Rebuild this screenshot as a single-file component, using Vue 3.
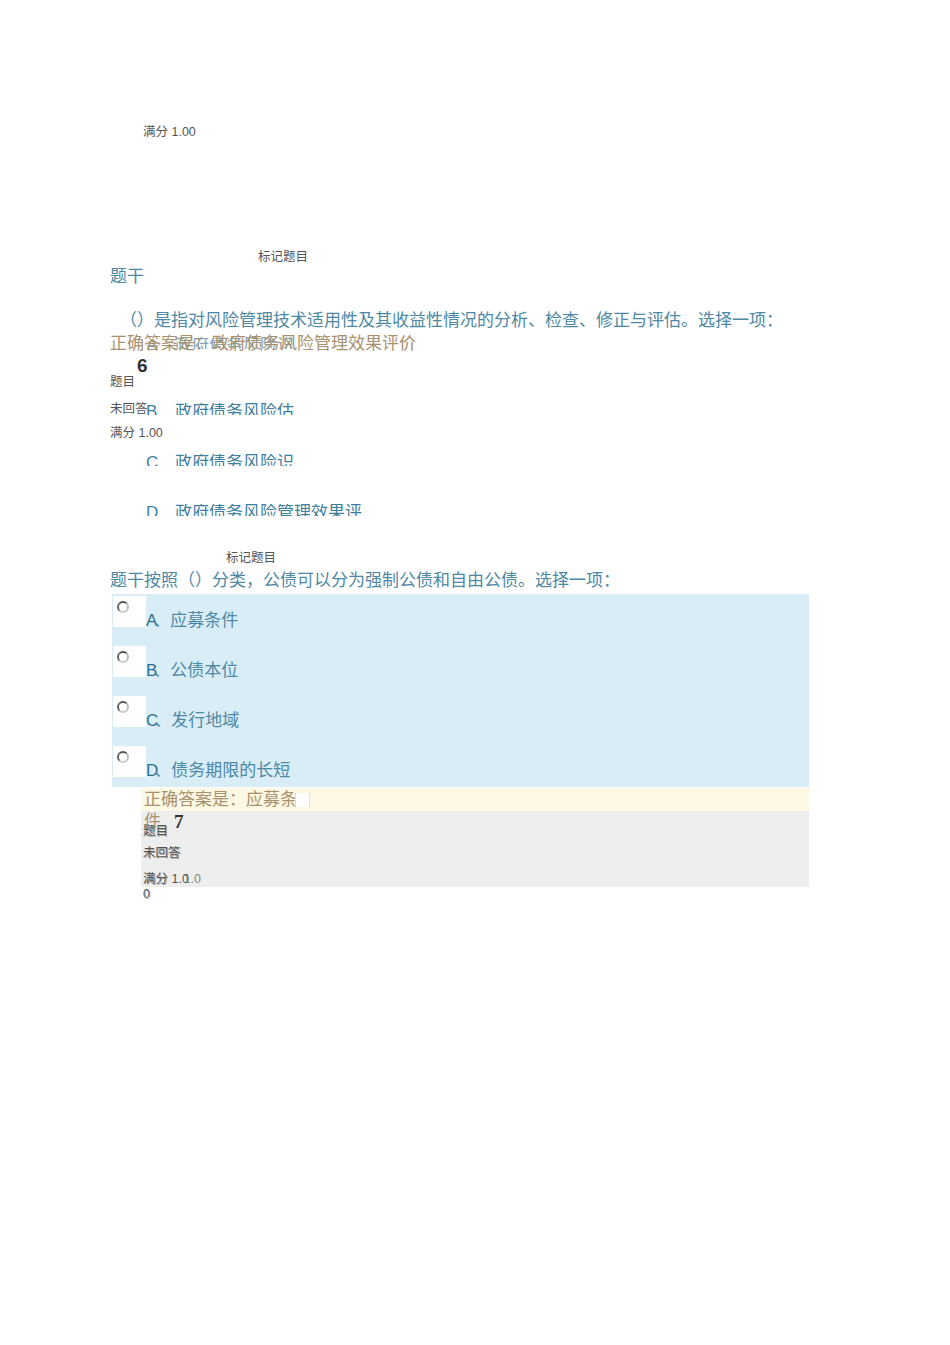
<template>
  <div class="page">
    <p class="meta score-top">满分 1.00</p>

    <section class="question">
      <p class="meta flag flag-five">标记题目</p>
      <p class="body-text stem-label">题干</p>
      <p class="body-text stem">（）是指对风险管理技术适用性及其收益性情况的分析、检查、修正与评估。选择一项：</p>

      <div class="stack">
        <div class="clipped-options">
          <div v-for="opt in clippedOptions" :key="opt.letter" class="clipped-row" :class="opt.cls">
            <span class="clipped-letter">{{ opt.letter }}</span>
            <span>{{ opt.text }}</span>
          </div>
        </div>
        <div class="info-left">
          <p class="body-text answer-text">正确答案是：政府债务风险管理效果评价</p>
          <p class="qno">6</p>
          <p class="meta info-title">题目</p>
          <p class="meta info-state">未回答</p>
          <p class="meta info-score">满分 1.00</p>
        </div>
      </div>
    </section>

    <section class="question">
      <p class="meta flag flag-six">标记题目</p>
      <p class="body-text stem-six">题干按照（）分类，公债可以分为强制公债和自由公债。选择一项：</p>

      <div class="options-panel">
        <div v-for="opt in options" :key="opt" class="option-row">
          <div class="radio-box"><span class="radio"></span></div>
          <span class="option-label"><b>{{ opt.slice(0, 1) }}</b>{{ opt.slice(1) }}</span>
        </div>
      </div>

      <div class="feedback">
        <div class="answer-bar">
          <p class="answer-wrap">正确答案是：应募条件</p>
          <span class="blot"></span>
        </div>
        <div class="info-box">
          <p class="qno qno-seven">7</p>
          <p class="meta ghost box-title">题目</p>
          <p class="meta ghost box-state">未回答</p>
          <p class="meta ghost box-score">满分 <span class="score-ghost">1.0</span>0</p>
        </div>
      </div>
    </section>
  </div>
</template>

<script setup>
const clippedOptions = [
  { letter: 'A', text: '政府债务风险识', cls: 'row-a' },
  { letter: 'B', text: '政府债务风险估', cls: 'row-b' },
  { letter: 'C', text: '政府债务风险识', cls: 'row-c' },
  { letter: 'D', text: '政府债务风险管理效果评', cls: 'row-d' },
]

const options = ['A、应募条件', 'B、公债本位', 'C、发行地域', 'D、债务期限的长短']
</script>

<style>
html,
body {
  background: #fff;
}
</style>

<style scoped>
.page {
  height: 1345px;
  overflow: hidden;
  box-sizing: border-box;
  padding: 124px 0 0 110px;
  background: #fff;
  font-family: "Liberation Sans", "Noto Sans CJK SC", sans-serif;
}

p {
  margin: 0;
}

.meta {
  font-size: 12.5px;
  line-height: 16px;
  height: 16px;
  color: #555;
}

.score-top {
  padding-left: 33px;
}

.flag-five {
  margin-top: 109px;
  padding-left: 148px;
}

.flag-six {
  margin-top: 34px;
  padding-left: 116px;
}

.body-text {
  font-size: 17px;
  line-height: 22px;
  height: 22px;
  color: #4d88a5;
  white-space: nowrap;
}

.stem-label {
  margin-top: 1px;
}

.stem {
  margin-top: 22px;
  padding-left: 10px;
}

.stack {
  display: grid;
  margin-top: 1px;
  height: 183px;
}

.stack > * {
  grid-area: 1 / 1;
}

.clipped-options {
  padding-left: 36px;
}

.clipped-row {
  display: flex;
  height: 12px;
  overflow: hidden;
  font-size: 17px;
  line-height: 18px;
  color: #3f7f9f;
}

.clipped-letter {
  width: 29px;
}

.row-a {
  margin-top: 4px;
  color: #8aa3b0;
}

.row-b {
  margin-top: 54px;
}

.row-c {
  margin-top: 39px;
}

.row-d {
  margin-top: 38px;
}

.answer-text {
  color: #a8916f;
}

.qno {
  font-size: 19px;
  font-weight: 700;
  line-height: 22px;
  height: 22px;
  color: #333;
}

.info-left .qno {
  padding-left: 27px;
}

.info-title {
  margin-top: -3px;
}

.info-state {
  margin-top: 11px;
}

.info-score {
  margin-top: 8px;
}

.stem-six {
  margin-top: 4px;
}

.options-panel {
  margin: 2px 0 0 2px;
  width: 697px;
  height: 193px;
  background: #d9edf7;
}

.option-row {
  display: flex;
  height: 50px;
  padding-left: 1px;
  box-sizing: border-box;
}

.radio-box {
  flex: none;
  width: 33px;
  height: 31px;
  margin-top: 2px;
  padding: 5px 0 0 4px;
  box-sizing: border-box;
  background: #fff;
}

.radio {
  display: block;
  width: 12px;
  height: 12px;
  box-sizing: border-box;
  border: 2px solid;
  border-color: #555 #bbb #ccc #666;
  border-radius: 50%;
  background: #fff;
}

.option-label {
  margin: 16px 0 0 0;
  font-size: 17px;
  line-height: 22px;
  color: #4d88a5;
  white-space: nowrap;
}

.option-label b {
  font-weight: 400;
  color: #2f6f90;
  margin-right: -4px;
}

.feedback {
  margin: 1px 0 0 31px;
  width: 668px;
}

.answer-bar {
  position: relative;
  z-index: 1;
  display: flex;
  height: 23px;
  padding-left: 3px;
  background: #fcf8e3;
}

.answer-wrap {
  width: 155px;
  padding-top: 1px;
  font-size: 17px;
  line-height: 22px;
  color: #a8916f;
}

.blot {
  flex: none;
  width: 15px;
  height: 14px;
  margin: 5px 0 0 -4px;
  box-sizing: border-box;
  background: #fff;
  border-left: 1px dotted #ccc;
  border-right: 1px dotted #ccc;
}

.info-box {
  height: 76px;
  padding-left: 2px;
  background: #eee;
}

.qno-seven {
  height: 0;
  padding-left: 31px;
  font-family: "Liberation Serif", serif;
}

.ghost {
  text-shadow: 1px 1px 0 rgba(85, 85, 85, 0.45);
}

.box-title {
  padding-top: 12px;
}

.box-state {
  margin-top: 6px;
}

.box-score {
  width: 50px;
  margin-top: 11px;
  word-break: break-all;
  line-height: 15px;
}

.score-ghost {
  text-shadow: 12px 0 0 rgba(85, 85, 85, 0.7);
}
</style>
